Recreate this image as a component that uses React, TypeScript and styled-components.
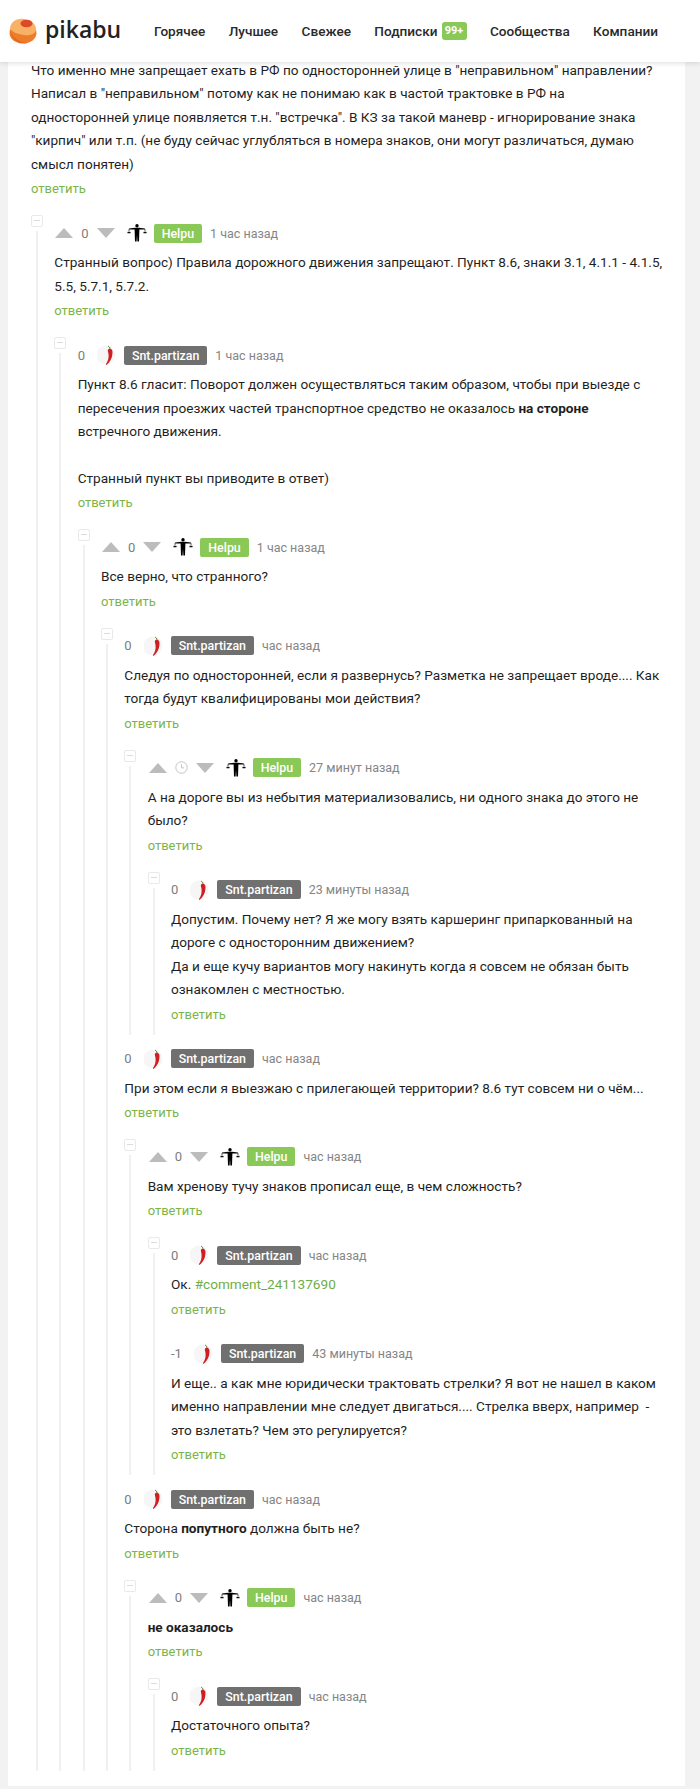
import { FC, ReactNode } from "react";
import styled, { createGlobalStyle } from "styled-components";

const GlobalStyle = createGlobalStyle`
  html, body {
    margin: 0;
    padding: 0;
    background: #f2f2f2;
    font-family: Roboto, "Liberation Sans", sans-serif;
    color: #1f1f1f;
  }
`;

const SPage = styled.div`
  width: 700px;
  height: 1789px;
  overflow: hidden;
`;

const SHeader = styled.header`
  position: relative;
  z-index: 2;
  display: flex;
  align-items: center;
  height: 62px;
  padding-left: 9px;
  background: #fff;
  box-shadow: 0 1px 5px rgba(0, 0, 0, 0.14);
`;

const SLogo = styled.div`
  display: flex;
  align-items: center;
  gap: 8px;
  width: 145px;
`;

const SLogoText = styled.span`
  font-family: "Open Sans", sans-serif;
  font-size: 23px;
  font-weight: 600;
  color: #222;
  line-height: 1;
  margin-top: -3px;
`;

const SNav = styled.nav`
  display: flex;
  align-items: center;
  gap: 23.4px;
`;

const SNavItem = styled.a`
  display: flex;
  align-items: center;
  gap: 4px;
  font-size: 13.6px;
  font-weight: 500;
  color: #2a2a2a;
`;

const SNavBadge = styled.span`
  display: inline-block;
  width: 25px;
  height: 18px;
  border-radius: 3px;
  background: #8ac858;
  color: #fff;
  font-size: 11px;
  font-weight: 700;
  line-height: 18px;
  text-align: center;
`;

const SCard = styled.main`
  margin: -3px 15px 0 8px;
  height: 1727px;
  padding-left: 23px;
  padding-right: 20px;
  background: #fff;
`;

const SText = styled.div`
  font-size: 13.6px;
  line-height: 23.45px;
  color: #1f1f1f;

  b {
    font-weight: 700;
  }
`;

const SReply = styled.a`
  display: block;
  margin-top: 3px;
  height: 20px;
  font-size: 13px;
  line-height: 20px;
  color: #7cb547;
`;

const SLink = styled.span`
  color: #6fae45;
`;

const SThreadRow = styled.div`
  display: grid;
  grid-template-columns: 23.33px 1fr;
  margin-top: 16px;
`;

const SRail = styled.div`
  display: flex;
  flex-direction: column;
  align-items: flex-start;
  margin-bottom: -10px;
`;

const SCollapse = styled.span`
  position: relative;
  flex: none;
  box-sizing: border-box;
  width: 12px;
  height: 12px;
  margin-bottom: 4px;
  border: 1px solid #e9e9e9;
  border-radius: 2px;

  &::after {
    content: "";
    position: absolute;
    left: 2px;
    right: 2px;
    top: 4px;
    height: 1px;
    background: #dcdcdc;
  }
`;

const SRailLine = styled.span`
  flex: 1;
  width: 2px;
  margin-left: 5px;
  background: #f0f0f0;
`;

const SThreadBody = styled.div`
  display: flex;
  flex-direction: column;
  gap: 16px;
  min-width: 0;
`;

const SComment = styled.article`
  padding-top: 8px;
`;

const SMeta = styled.div`
  display: flex;
  align-items: center;
  height: 20px;
  margin-bottom: 8px;
`;

const SVote = styled.div`
  display: flex;
  align-items: center;
  gap: 8px;
  margin-left: 1px;
  margin-right: 12px;
`;

const SScore = styled.span`
  font-size: 13px;
  color: #7d7d7d;
`;

const SPlainScore = styled(SScore)`
  margin-right: 12px;
`;

const SAuthor = styled.span<{ $green: boolean }>`
  height: 19px;
  margin: 0 8px 0 7px;
  padding: 0 8px;
  border-radius: 2px;
  background: ${(props) => (props.$green ? "#8ac858" : "#707070")};
  color: #fff;
  font-size: 12.4px;
  font-weight: 500;
  line-height: 19px;
`;

const STime = styled.span`
  font-size: 12.5px;
  color: #858585;
`;

const LogoMark = () => (
  <svg width="28" height="26" viewBox="0 0 28 26">
    <ellipse cx="14" cy="15" rx="13.5" ry="10.5" fill="#ee7d2b" />
    <path d="M1 10 C2 3 9 0 15 1 C22 2 27 6 27 11 C27 16 21 18 15 17 C8 16 3 14 1 10Z" fill="#f8b266" />
    <path d="M1 13 C4 20 10 24 18 25 C12 26 3 24 1 13Z" fill="#e2681f" />
    <ellipse cx="17.5" cy="5.5" rx="6" ry="3.8" fill="#dc4a26" />
  </svg>
);

const UpArrow = () => (
  <svg width="18" height="10" viewBox="0 0 18 10">
    <path d="M9 0 L18 10 L0 10Z" fill="#bcbcbc" />
  </svg>
);

const DownArrow = () => (
  <svg width="18" height="10" viewBox="0 0 18 10">
    <path d="M0 0 L18 0 L9 10Z" fill="#bcbcbc" />
  </svg>
);

const ClockIcon = () => (
  <svg width="13" height="13" viewBox="0 0 13 13" fill="none" stroke="#c4c4c4">
    <circle cx="6.5" cy="6.5" r="5.7" />
    <path d="M6.5 3.2 V6.8 H9" />
  </svg>
);

const ScalesAvatar = () => (
  <svg width="20" height="20" viewBox="0 0 20 20" fill="none">
    <circle cx="10" cy="2.8" r="1.7" fill="#000" />
    <path d="M2 5.6 L8 4.8 H12 L18 5.6 L18 6.4 L12.4 6.4 L12 18.5 H10.4 L10 12 L9.6 18.5 H8 L7.6 6.4 L2 6.4Z" fill="#000" />
    <path d="M0.5 9.6 H3.5 M16.5 9.6 H19.5" stroke="#000" strokeWidth="1.3" />
    <path d="M2 6 L1 9.6 M2 6 L3 9.6 M18 6 L17 9.6 M18 6 L19 9.6" stroke="#555" strokeWidth="0.5" />
  </svg>
);

const ChiliAvatar = () => (
  <svg width="20" height="20" viewBox="0 0 20 20">
    <circle cx="9" cy="10" r="9.5" fill="#f6f6f6" />
    <path d="M11 1 C12 1.5 13 2.5 13 4" stroke="#5a7d2a" strokeWidth="1" fill="none" />
    <path d="M11 4.5 C13 3 15.5 4 15.5 7 C15.5 12 14 16 10 19.5 C9.5 20 8.5 19.6 9 19 C11 16 12 13 11.5 9 C11.3 7.5 10.5 5.5 11 4.5Z" fill="#cf1f23" />
  </svg>
);

const Thread: FC<{ children: ReactNode }> = ({ children }) => (
  <SThreadRow>
    <SRail>
      <SCollapse />
      <SRailLine />
    </SRail>
    <SThreadBody>{children}</SThreadBody>
  </SThreadRow>
);

interface CommentProps {
  author: "Helpu" | "Snt.partizan";
  time: string;
  score?: number;
  clock?: boolean;
  text: ReactNode;
  children?: ReactNode;
}

const Comment: FC<CommentProps> = ({ author, time, score = 0, clock, text, children }) => {
  const green = author === "Helpu";
  return (
    <SComment>
      <SMeta>
        {green ? (
          <SVote>
            <UpArrow />
            {clock ? <ClockIcon /> : <SScore>{score}</SScore>}
            <DownArrow />
          </SVote>
        ) : (
          <SPlainScore>{score}</SPlainScore>
        )}
        {green ? <ScalesAvatar /> : <ChiliAvatar />}
        <SAuthor $green={green}>{author}</SAuthor>
        <STime>{time}</STime>
      </SMeta>
      <SText>{text}</SText>
      <SReply>ответить</SReply>
      {children && <Thread>{children}</Thread>}
    </SComment>
  );
};

const navItems = ["Горячее", "Лучшее", "Свежее"];

export default function App() {
  return (
    <SPage>
      <GlobalStyle />
      <SHeader>
        <SLogo>
          <LogoMark />
          <SLogoText>pikabu</SLogoText>
        </SLogo>
        <SNav>
          {navItems.map((item) => (
            <SNavItem key={item}>{item}</SNavItem>
          ))}
          <SNavItem>
            Подписки <SNavBadge>99+</SNavBadge>
          </SNavItem>
          <SNavItem>Сообщества</SNavItem>
          <SNavItem>Компании</SNavItem>
        </SNav>
      </SHeader>
      <SCard>
        <SText>
          Что именно мне запрещает ехать в РФ по односторонней улице в "неправильном" направлении?
          <br />
          Написал в "неправильном" потому как не понимаю как в частой трактовке в РФ на
          <br />
          односторонней улице появляется т.н. "встречка". В КЗ за такой маневр - игнорирование знака
          <br />
          "кирпич" или т.п. (не буду сейчас углубляться в номера знаков, они могут различаться, думаю
          <br />
          смысл понятен)
        </SText>
        <SReply>ответить</SReply>
        <Thread>
          <Comment
            author="Helpu"
            time="1 час назад"
            text={
              <>
                Странный вопрос) Правила дорожного движения запрещают. Пункт 8.6, знаки 3.1, 4.1.1 - 4.1.5,
                <br />
                5.5, 5.7.1, 5.7.2.
              </>
            }
          >
            <Comment
              author="Snt.partizan"
              time="1 час назад"
              text={
                <>
                  Пункт 8.6 гласит: Поворот должен осуществляться таким образом, чтобы при выезде с
                  <br />
                  пересечения проезжих частей транспортное средство не оказалось <b>на стороне</b>
                  <br />
                  встречного движения.
                  <br />
                  <br />
                  Странный пункт вы приводите в ответ)
                </>
              }
            >
              <Comment author="Helpu" time="1 час назад" text="Все верно, что странного?">
                <Comment
                  author="Snt.partizan"
                  time="час назад"
                  text={
                    <>
                      Следуя по односторонней, если я развернусь? Разметка не запрещает вроде.... Как
                      <br />
                      тогда будут квалифицированы мои действия?
                    </>
                  }
                >
                  <Comment
                    author="Helpu"
                    time="27 минут назад"
                    clock
                    text={
                      <>
                        А на дороге вы из небытия материализовались, ни одного знака до этого не
                        <br />
                        было?
                      </>
                    }
                  >
                    <Comment
                      author="Snt.partizan"
                      time="23 минуты назад"
                      text={
                        <>
                          Допустим. Почему нет? Я же могу взять каршеринг припаркованный на
                          <br />
                          дороге с односторонним движением?
                          <br />
                          Да и еще кучу вариантов могу накинуть когда я совсем не обязан быть
                          <br />
                          ознакомлен с местностью.
                        </>
                      }
                    />
                  </Comment>
                </Comment>
                <Comment
                  author="Snt.partizan"
                  time="час назад"
                  text="При этом если я выезжаю с прилегающей территории? 8.6 тут совсем ни о чём..."
                >
                  <Comment author="Helpu" time="час назад" text="Вам хренову тучу знаков прописал еще, в чем сложность?">
                    <Comment
                      author="Snt.partizan"
                      time="час назад"
                      text={
                        <>
                          Ок. <SLink>#comment_241137690</SLink>
                        </>
                      }
                    />
                    <Comment
                      author="Snt.partizan"
                      time="43 минуты назад"
                      score={-1}
                      text={
                        <>
                          И еще.. а как мне юридически трактовать стрелки? Я вот не нашел в каком
                          <br />
                          именно направлении мне следует двигаться.... Стрелка вверх, например&nbsp; -
                          <br />
                          это взлетать? Чем это регулируется?
                        </>
                      }
                    />
                  </Comment>
                </Comment>
                <Comment
                  author="Snt.partizan"
                  time="час назад"
                  text={
                    <>
                      Сторона <b>попутного</b> должна быть не?
                    </>
                  }
                >
                  <Comment author="Helpu" time="час назад" text={<b>не оказалось</b>}>
                    <Comment author="Snt.partizan" time="час назад" text="Достаточного опыта?" />
                  </Comment>
                </Comment>
              </Comment>
            </Comment>
          </Comment>
        </Thread>
      </SCard>
    </SPage>
  );
}
